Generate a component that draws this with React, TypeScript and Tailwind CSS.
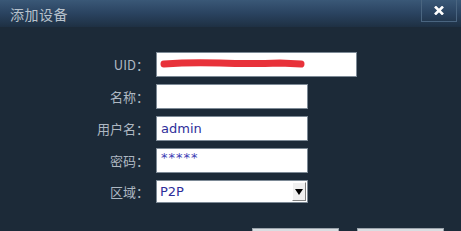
import React from 'react';

const cjk = { fontFamily: '"Noto Sans CJK SC", "Noto Sans", sans-serif' };

const Row: React.FC<{ label: string; wide?: boolean; children?: React.ReactNode }> = ({ label, wide, children }) => (
  <div className="flex items-center">
    <div className="w-[150px] text-right text-[13px] text-[#aeb8c2] pr-[1px]" style={cjk}>
      {label}
    </div>
    <div
      className={`ml-[6px] h-[25px] ${wide ? 'w-[201px]' : 'w-[152px]'} bg-white border border-[#7d8a96] relative flex items-center`}
    >
      {children}
    </div>
  </div>
);

export default function App() {
  return (
    <div className="w-[461px] h-[231px] bg-[#1c2a38] overflow-hidden flex flex-col" style={cjk}>
      <div className="h-[27px] bg-gradient-to-b from-[#3a5877] via-[#2a4360] to-[#1e3043] flex items-start justify-between shrink-0">
        <span className="ml-[10px] mt-[4px] text-[14px] text-[#b8c2cc] tracking-[0.5px]">添加设备</span>
        <div className="mr-[4px] w-[36px] h-[22px] border border-t-0 border-[#4a6580] flex items-center justify-center">
          <svg width="10" height="9" viewBox="0 0 10 9">
            <path d="M1 0.5 L9 8.5 M9 0.5 L1 8.5" stroke="#ffffff" strokeWidth="2.6" />
          </svg>
        </div>
      </div>
      <div className="flex flex-col gap-[7px] pt-[25px]">
        <Row label="UID：" wide>
          <svg className="absolute left-[3px] top-[5px]" width="146" height="12" viewBox="0 0 146 12">
            <path d="M4 6 Q30 4 60 5 T120 5 L141 6" stroke="#e8323a" strokeWidth="7" strokeLinecap="round" fill="none" />
          </svg>
        </Row>
        <Row label="名称：" />
        <Row label="用户名：">
          <span className="ml-[4px] text-[13px] text-[#2e2e9a]" style={{ fontFamily: 'Tahoma, "DejaVu Sans", sans-serif' }}>admin</span>
        </Row>
        <Row label="密码：">
          <span className="ml-[4px] -mt-[6px] text-[13px] text-[#3c3cb4] tracking-[1px]" style={{ fontFamily: '"DejaVu Sans", sans-serif' }}>*****</span>
        </Row>
        <div className="flex items-center">
          <div className="w-[150px] text-right text-[13px] text-[#aeb8c2] pr-[1px]">区域：</div>
          <div className="ml-[6px] h-[23px] w-[152px] bg-white border border-[#7d8a96] flex items-center justify-between">
            <span className="ml-[3px] text-[13px] text-[#2e2e9a]" style={{ fontFamily: '"DejaVu Sans", sans-serif' }}>P2P</span>
            <div className="w-[14px] h-[19px] mr-[1px] border border-t-[#ffffff] border-l-[#ffffff] border-r-[#808080] border-b-[#808080] bg-[#f0f0f0] flex items-center justify-center">
              <svg width="8" height="6" viewBox="0 0 8 6">
                <path d="M0 0 H8 L4 6 Z" fill="#000" />
              </svg>
            </div>
          </div>
        </div>
      </div>
      <div className="flex mt-[25px] ml-[252px] gap-[18px]">
        <div className="w-[87px] h-[20px] bg-[#d9dde1] border border-[#9aa3ab]" />
        <div className="w-[87px] h-[20px] bg-[#d9dde1] border border-[#9aa3ab]" />
      </div>
    </div>
  );
}
